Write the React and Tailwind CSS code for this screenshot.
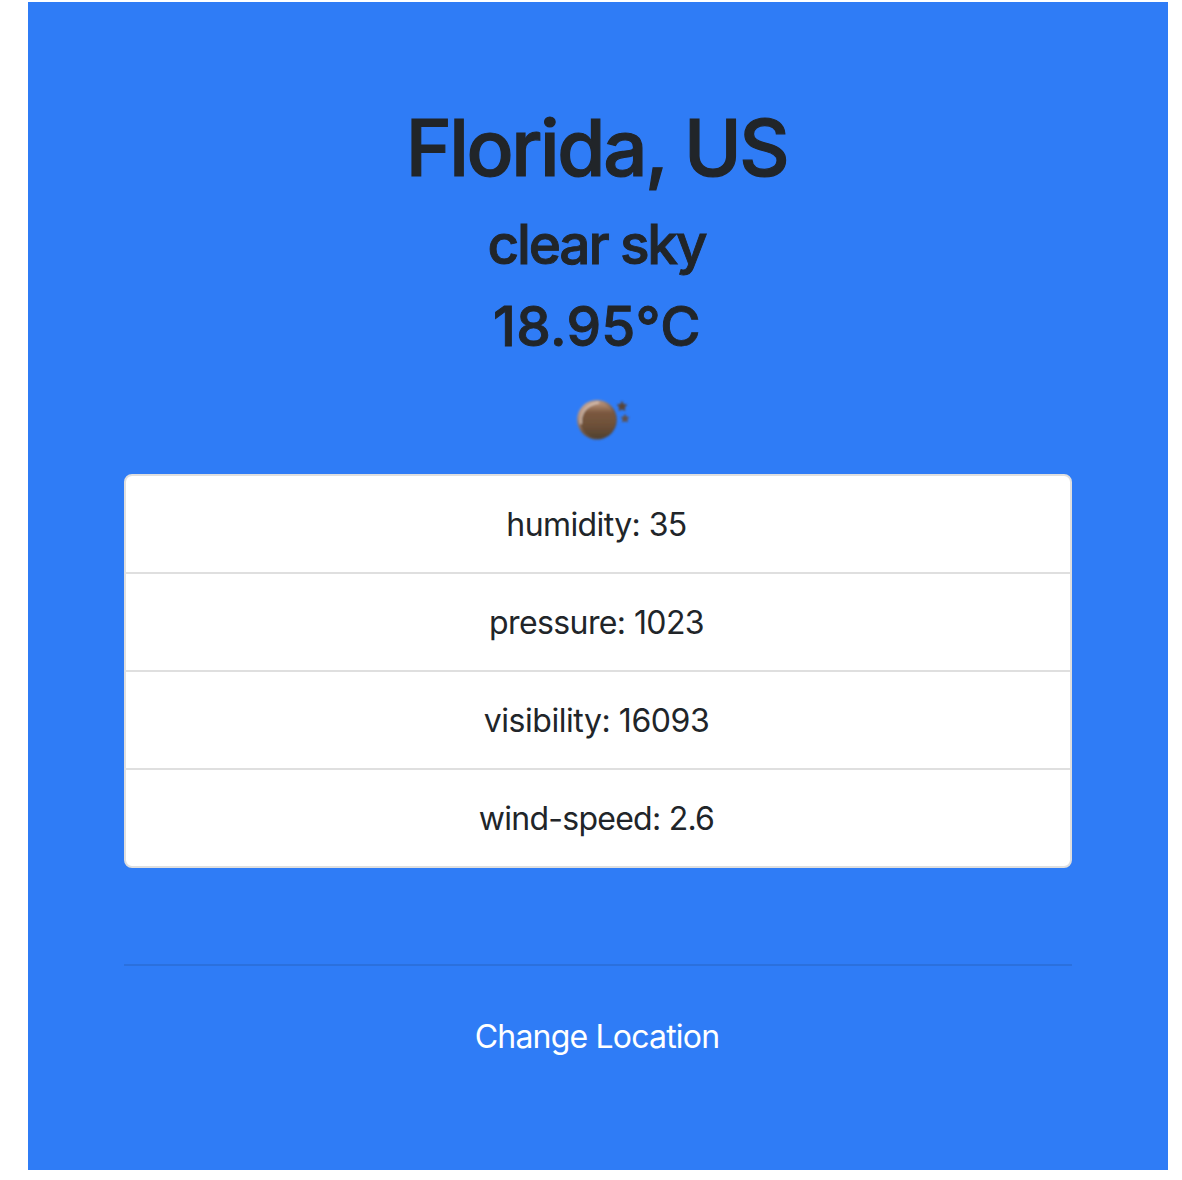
const readings = [
  { label: 'humidity', value: '35', spacing: 'tracking-[-0.6px]' },
  { label: 'pressure', value: '1023', spacing: 'tracking-[-0.6px]' },
  { label: 'visibility', value: '16093', spacing: 'tracking-[-0.45px]' },
  { label: 'wind-speed', value: '2.6', spacing: 'tracking-[-0.75px]' },
];

function MoonIcon() {
  return (
    <svg viewBox="0 0 100 98" className="h-[98px] w-[100px]" aria-label="clear sky at night">
      <defs>
        <linearGradient id="rim" x1="0.1" y1="0" x2="0.75" y2="0.9">
          <stop offset="0" stopColor="#d2b5a3" />
          <stop offset="0.3" stopColor="#b18c75" />
          <stop offset="0.6" stopColor="#765843" />
          <stop offset="1" stopColor="#554331" />
        </linearGradient>
        <linearGradient id="disc" x1="0" y1="0" x2="0" y2="1">
          <stop offset="0" stopColor="#b99279" />
          <stop offset="0.28" stopColor="#7b583f" />
          <stop offset="0.65" stopColor="#6d5038" />
          <stop offset="1" stopColor="#51412f" />
        </linearGradient>
        <filter id="soften" x="-20%" y="-20%" width="140%" height="140%">
          <feGaussianBlur stdDeviation="0.9" />
        </filter>
      </defs>
      <g filter="url(#soften)">
        <circle cx="49" cy="43.7" r="19.8" fill="url(#rim)" />
        <circle cx="50" cy="44.5" r="17.8" fill="url(#disc)" />
        <path d="M33 48C32 37 38 28.5 51 26.5" fill="none" stroke="#dfcdc2" strokeWidth="1.8" opacity="0.8" />
        <path d="M74 25.5l1.5 3 3.3.4-2.4 2.3.6 3.3-3-1.5-3 1.5.6-3.3-2.4-2.3 3.3-.4z" fill="#594437" stroke="#594437" strokeWidth="0.8" />
        <path d="M77 38.5l1.2 2.5 2.7.4-2 1.9.5 2.7-2.4-1.3-2.4 1.3.5-2.7-2-1.9 2.7-.4z" fill="#625047" stroke="#625047" strokeWidth="0.8" />
      </g>
    </svg>
  );
}

export default function App() {
  return (
    <main className="h-[1180px] overflow-hidden bg-white pr-[14px] pl-7 pt-0.5 font-['Inter',sans-serif] text-[#212529]">
      <section className="flex h-[1168px] flex-col items-center bg-[#2f7cf6] px-24 pt-[98px]">
        <h1 className="mb-[15px] pr-[3px] text-[78px] leading-[96px] font-medium tracking-[-2.4px] [-webkit-text-stroke:1.2px_#212529]">Florida, US</h1>
        <h3 className="mb-[15px] pr-[3px] text-[55px] leading-[67px] font-medium tracking-[-2.2px] [-webkit-text-stroke:0.9px_#212529]">clear sky</h3>
        <h3 className="mb-4 pr-0.5 text-[55px] leading-[67px] font-medium tracking-[0.3px] [-webkit-text-stroke:0.9px_#212529]">18.95°C</h3>
        <div className="h-[98px]"><MoonIcon /></div>
        <ul className="w-full divide-y-2 divide-[#dfdfdf] rounded-lg border-2 border-[#dfdfdf] bg-white text-center text-[32px]">
          {readings.map(({ label, value, spacing }) => (
            <li key={label} className="h-[98px] pr-[3px] leading-[98px] last:h-24">
              <span className={spacing}>{label}: {value}</span>
            </li>
          ))}
        </ul>
        <hr className="mt-24 h-0.5 w-full border-0 bg-[#2b70dd]" />
        <button className="mt-[46px] pr-0.5 text-[32px] leading-[49px] tracking-[-0.8px] text-white">Change Location</button>
      </section>
    </main>
  );
}
